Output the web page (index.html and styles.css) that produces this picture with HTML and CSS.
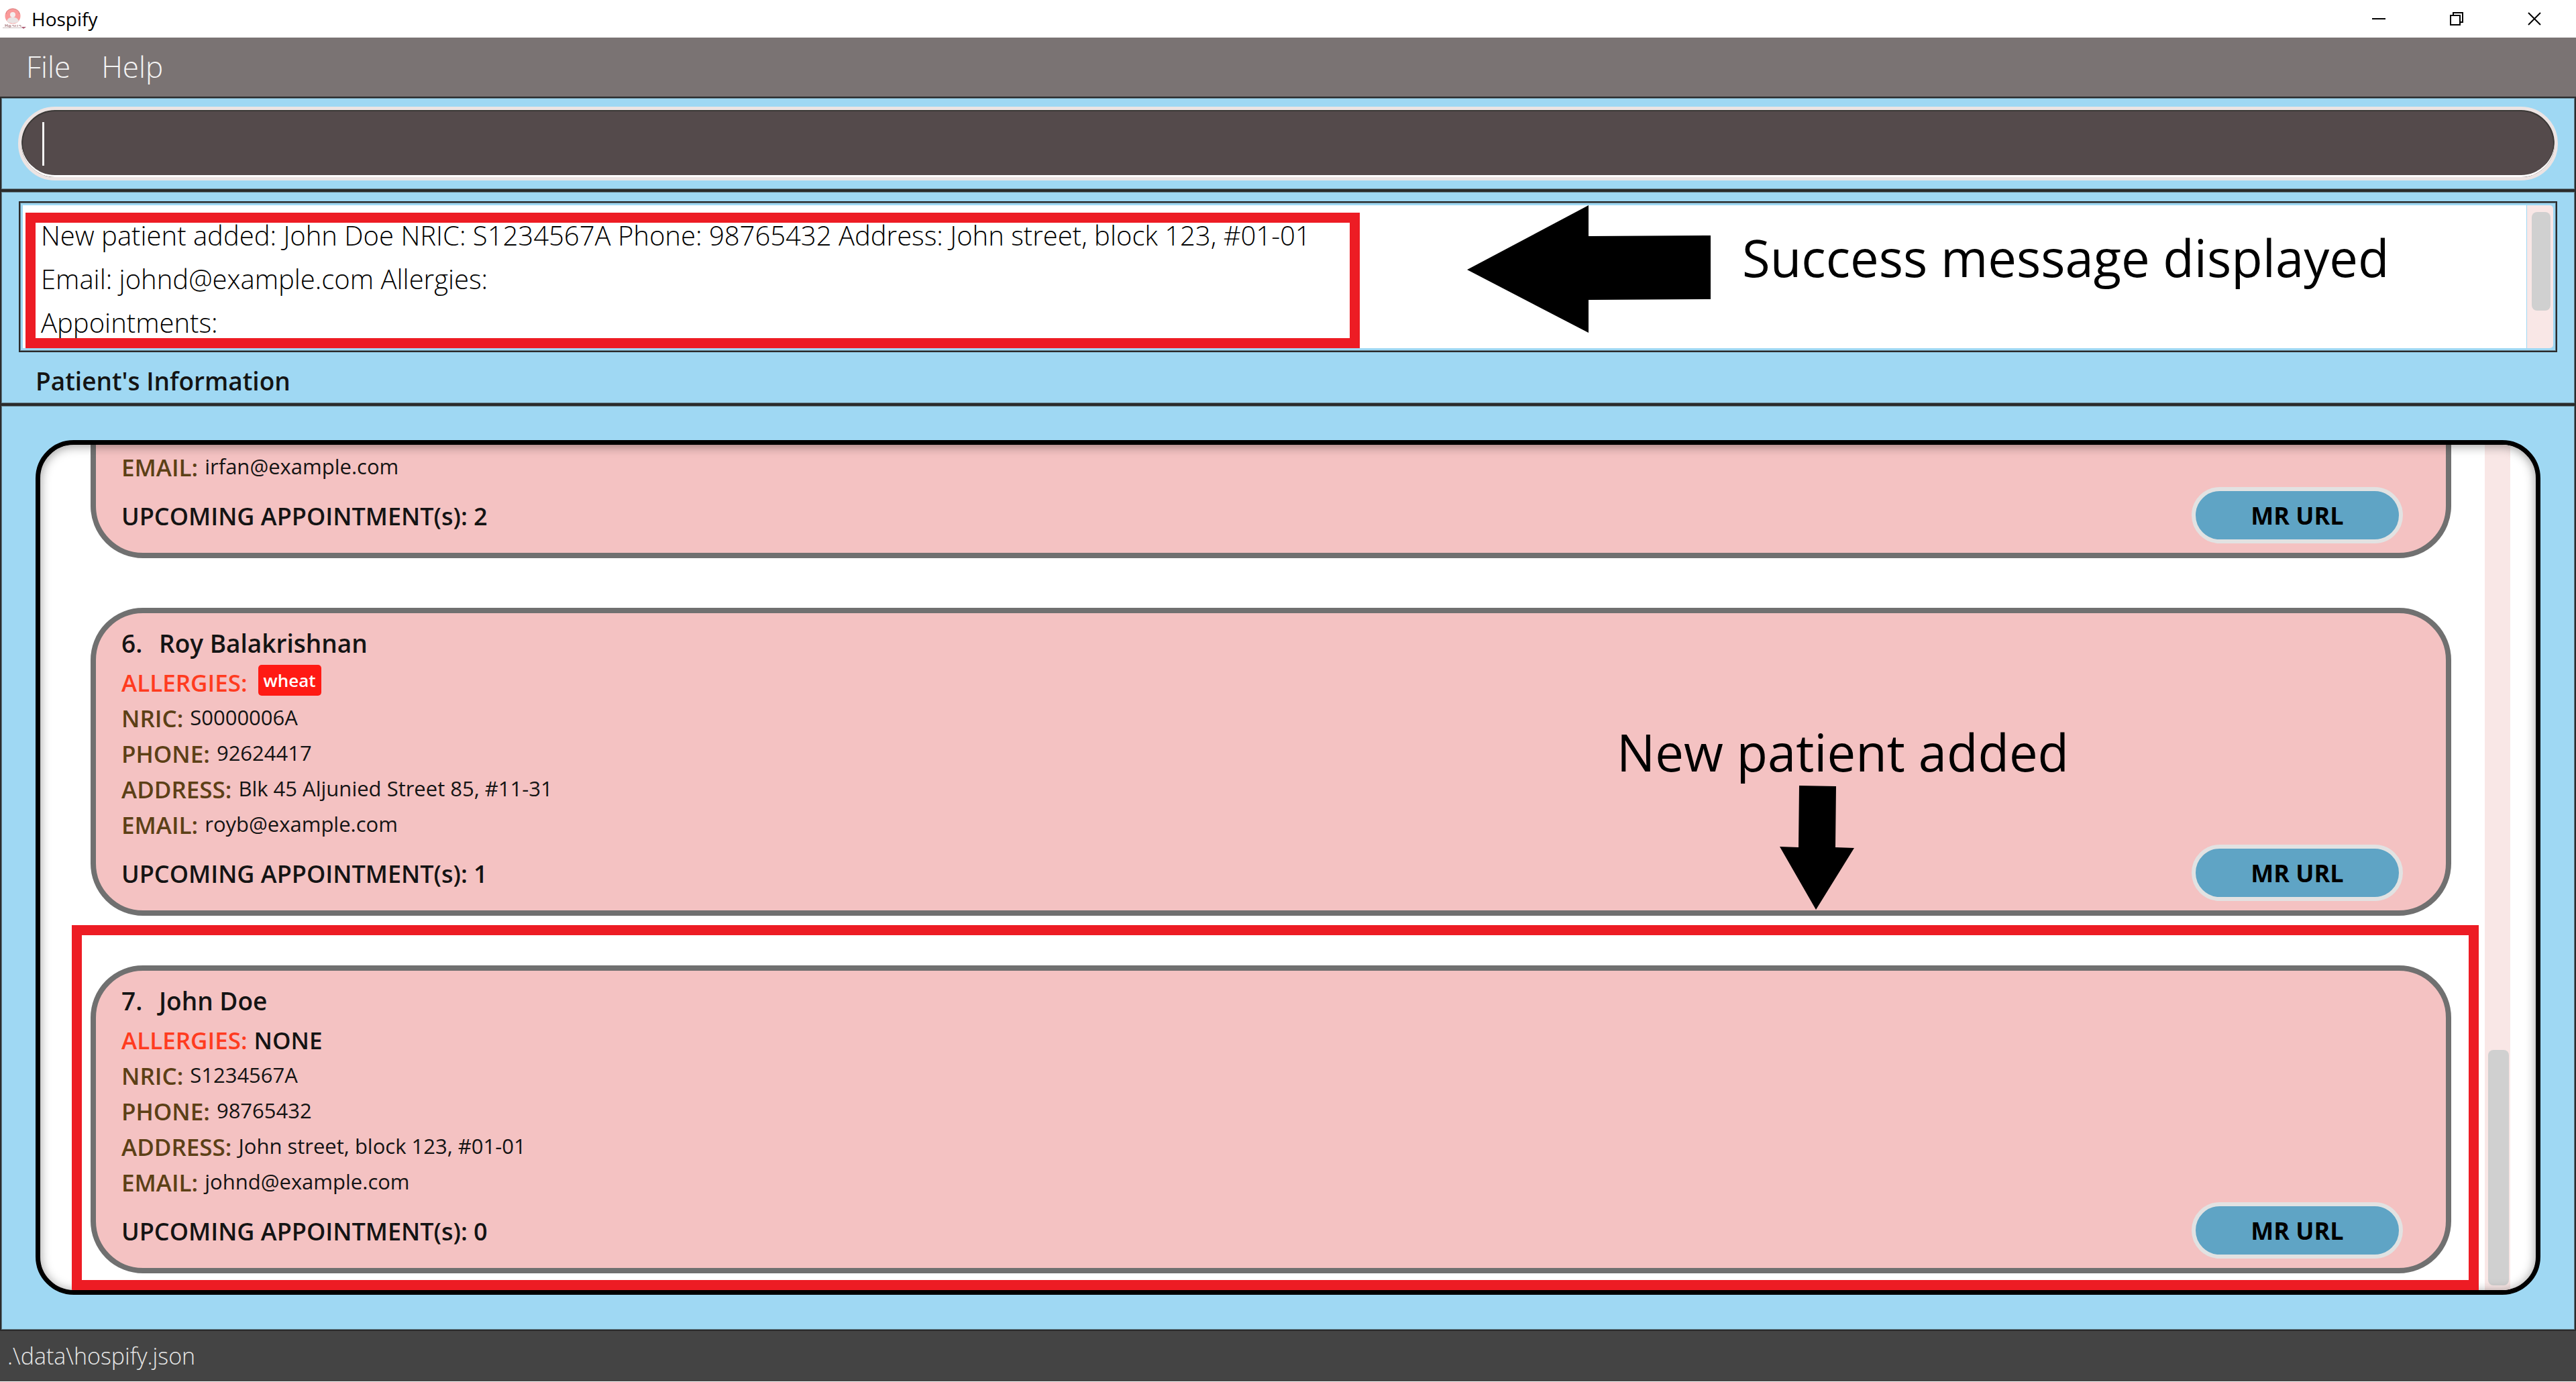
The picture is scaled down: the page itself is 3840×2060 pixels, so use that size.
FILE: index.html
```html
<!DOCTYPE html>
<html lang="en">
<head>
<meta charset="utf-8">
<title>Hospify</title>
<link rel="stylesheet" href="styles.css">
</head>
<body>
<header class="titlebar">
  <svg class="app-icon" viewBox="0 0 36 32" aria-hidden="true">
    <circle cx="15" cy="12" r="11.500" fill="#fa9a9a"/>
    <path d="M5 9a10 8 0 0 1 20 0" fill="none" stroke="#d98686" stroke-width="1"/>
    <circle cx="15" cy="10" r="4" fill="#f4eeee"/>
    <path d="M6 20q1-5 6-6h6q5 1 6 6q-9 6-18 0z" fill="#e9e4e4"/>
    <path d="M4 24v4M7 24v4M4 26h3M9 26h3v2H9zM14 26h3v2M19 25v3M22 25v3M24 26h3v2" fill="none" stroke="#a87c80" stroke-width="1"/>
    <path d="M0 29.500h30" stroke="#cbbcbc" stroke-width="1"/>
    <path d="M28 28h7l-4 3z" fill="#b0607a"/>
  </svg>
  <span class="app-name">Hospify</span>
  <div class="window-buttons">
    <button type="button" aria-label="Minimize"><svg viewBox="0 0 20 20"><path d="M0 10h20"/></svg></button>
    <button type="button" aria-label="Restore"><svg viewBox="0 0 20 20"><path d="M1 5h14v14H1zM5 5V1h14v14h-4"/></svg></button>
    <button type="button" aria-label="Close"><svg viewBox="0 0 20 20"><path d="M1 1l18 18M19 1L1 19"/></svg></button>
  </div>
</header>

<nav class="menubar">
  <button type="button">File</button>
  <button type="button">Help</button>
</nav>

<section class="pane command-pane">
  <div class="command-box">
    <span class="caret"></span>
    <input class="command-input" type="text" aria-label="Command">
  </div>
</section>

<section class="pane result-pane">
  <div class="result-box">
    <div class="result-text">
      <p>New patient added: John Doe NRIC: S1234567A Phone: 98765432 Address: John street, block 123, #01-01</p>
      <p>Email: johnd@example.com Allergies:</p>
      <p>Appointments:</p>
    </div>
    <div class="result-scroll"><div class="result-thumb"></div></div>
    <div class="mark mark-result"></div>
    <div class="note note-result">
      <svg class="arrow-left" viewBox="0 0 363 190" aria-hidden="true"><path d="M0 96L181 0V46L363 45V140L181 141V190Z"/></svg>
      <span>Success message displayed</span>
    </div>
  </div>
  <h1 class="section-title">Patient's Information</h1>
</section>

<main class="pane list-pane">
  <div class="list-frame">
    <div class="list-view">
      <article class="card">
        <div class="info">
          <div class="row"><span class="label">EMAIL:</span><span class="value">irfan@example.com</span></div>
          <p class="upcoming">UPCOMING APPOINTMENT(s): 2</p>
        </div>
        <button type="button" class="record">MR URL</button>
      </article>
      <article class="card">
        <div class="info">
          <h2 class="name"><span class="index">6.</span>Roy Balakrishnan</h2>
          <div class="row"><span class="label allergy">ALLERGIES:</span><span class="tag">wheat</span></div>
          <div class="row"><span class="label">NRIC:</span><span class="value">S0000006A</span></div>
          <div class="row"><span class="label">PHONE:</span><span class="value">92624417</span></div>
          <div class="row"><span class="label">ADDRESS:</span><span class="value">Blk 45 Aljunied Street 85, #11-31</span></div>
          <div class="row"><span class="label">EMAIL:</span><span class="value">royb@example.com</span></div>
          <p class="upcoming">UPCOMING APPOINTMENT(s): 1</p>
        </div>
        <button type="button" class="record">MR URL</button>
        <div class="note note-card">
          <span>New patient added</span>
          <svg class="arrow-down" viewBox="0 0 111 185" aria-hidden="true"><path d="M29 0L84 1L83 92L111 93L54 185L0 91L28 92Z"/></svg>
        </div>
      </article>
      <article class="card">
        <div class="info">
          <h2 class="name"><span class="index">7.</span>John Doe</h2>
          <div class="row"><span class="label allergy">ALLERGIES:</span><span class="none">NONE</span></div>
          <div class="row"><span class="label">NRIC:</span><span class="value">S1234567A</span></div>
          <div class="row"><span class="label">PHONE:</span><span class="value">98765432</span></div>
          <div class="row"><span class="label">ADDRESS:</span><span class="value">John street, block 123, #01-01</span></div>
          <div class="row"><span class="label">EMAIL:</span><span class="value">johnd@example.com</span></div>
          <p class="upcoming">UPCOMING APPOINTMENT(s): 0</p>
        </div>
        <button type="button" class="record">MR URL</button>
        <div class="mark mark-card"></div>
      </article>
    </div>
    <div class="list-scroll"><div class="list-thumb"></div></div>
  </div>
</main>

<footer class="statusbar">.\data\hospify.json</footer>
</body>
</html>
```
FILE: styles.css
```css
* { box-sizing: border-box; }

body {
  margin: 0;
  min-height: 100vh;
  height: 100vh;
  display: flex;
  flex-direction: column;
  overflow: hidden;
  background: #fff;
  color: #141414;
  font-family: "Open Sans", "Noto Sans", sans-serif;
}

button { font-family: inherit; margin: 0; padding: 0; border: 0; background: none; }
p, h1, h2 { margin: 0; }

/* window title bar */
.titlebar {
  flex: none;
  height: 56px;
  display: flex;
  align-items: center;
  padding: 0 4px;
}
.app-icon { width: 36px; height: 32px; }
.app-name { margin-left: 7px; font-size: 28px; color: #000; }
.window-buttons { margin-left: auto; display: flex; }
.window-buttons button {
  width: 116px;
  height: 54px;
  display: flex;
  align-items: center;
  justify-content: center;
}
.window-buttons svg { width: 20px; height: 20px; fill: none; stroke: #000; stroke-width: 2; }

/* menu */
.menubar {
  flex: none;
  height: 88px;
  display: flex;
  align-items: center;
  gap: 46px;
  padding: 0 39px 2px;
  background: #7a7373;
}
.menubar button { font-size: 44px; font-weight: 300; line-height: 60px; color: #f4f4f4; }

/* framed panes */
.pane {
  flex: none;
  border: 2px solid #2b2b2b;
  box-shadow: inset 0 0 0 1px #64808c;
  background: #9fd8f3;
}
.command-pane { padding: 13px 25px; }
.command-box {
  height: 110px;
  display: flex;
  align-items: center;
  padding: 0 31px;
  border: 5px solid #ece4e3;
  border-radius: 55px;
  background: #544a4b;
  box-shadow: inset 0 -3px 0 #fff, inset 0 0 0 2px #3a3836;
}
.caret { width: 3px; height: 65px; background: #f4f4f4; }
.command-input {
  flex: 1;
  min-width: 0;
  border: 0;
  outline: 0;
  background: none;
  color: #fff;
  font: 300 40px "Open Sans", sans-serif;
}

.result-pane { padding: 14px 26px 0; }
.result-box {
  position: relative;
  height: 225px;
  display: flex;
  border: 2px solid #2b2b2b;
  padding: 4px;
  box-shadow: inset 0 0 0 1px #64808c;
}
.result-text {
  flex: 1;
  padding: 12px 27px 0;
  background: #fff;
  color: #000;
  font-size: 40px;
  font-weight: 300;
  line-height: 65px;
}
.result-scroll {
  width: 40px;
  padding: 10px 4px 0 7px;
  background: #f9e7e6;
  border-left: 1px solid #9fd8f3;
  border-radius: 0 5px 5px 0;
}
.result-thumb { height: 147px; border-radius: 8px; background: #d0d0d0; }
.section-title {
  padding: 13px 25px 0;
  height: 76px;
  font-size: 37px;
  font-weight: 600;
  line-height: 60px;
}

/* annotations drawn over the window */
.mark { position: absolute; border: 15px solid #ed1c24; }
.mark-result { left: 8px; top: 15px; width: 1989px; height: 202px; }
.mark-card { left: -36px; top: -68px; right: -49px; bottom: -33px; }
.note { position: absolute; display: flex; color: #000; font-size: 76px; line-height: 100px; white-space: nowrap; }
.note-result { left: 2157px; top: 4px; gap: 47px; }
.note-result span { padding-top: 28px; }
.note-card { left: 2267px; top: 157px; flex-direction: column; }
.arrow-left { width: 363px; height: 190px; }
.arrow-down { width: 111px; height: 185px; margin-left: 243px; }

/* patient list */
.list-pane { flex: 1; min-height: 0; padding: 51px 51px 52px; }
.list-frame {
  position: relative;
  height: 100%;
  display: flex;
  overflow: hidden;
  border: 7px solid #000;
  border-radius: 57px;
  background: #fff;
}
.list-frame::after {
  content: "";
  position: absolute;
  inset: 0;
  border-radius: 50px;
  box-shadow: inset 0 2px 16px rgba(0, 0, 0, .4);
  pointer-events: none;
}
.list-view {
  flex: 1;
  min-width: 0;
  display: flex;
  flex-direction: column;
  justify-content: flex-end;
  gap: 74px;
  padding: 0 50px 25px 75px;
}
.list-scroll {
  flex: none;
  width: 38px;
  margin-right: 38px;
  padding: 0 2px 7px 5px;
  display: flex;
  flex-direction: column;
  justify-content: flex-end;
  background: #f9e7e6;
}
.list-thumb { height: 351px; border-radius: 8px; background: #d0d0d0; }

.card {
  position: relative;
  z-index: 1;
  flex: none;
  min-height: 459px;
  display: flex;
  justify-content: space-between;
  align-items: flex-end;
  padding: 18px 64px 14px 38px;
  border: 8px solid #707070;
  border-radius: 78px;
  background: #f4c2c2;
}
.card:first-child { z-index: 0; }
.info { padding-bottom: 14px; }
.name { display: flex; margin-bottom: 6px; font-size: 37px; font-weight: 600; line-height: 53px; }
.index { width: 56px; }
.row { display: flex; align-items: center; gap: 10px; height: 53px; line-height: 53px; }
.label { font-size: 35px; font-weight: 600; color: #5c4016; }
.allergy { color: #ff3b1f; }
.none { font-size: 35px; font-weight: 600; }
.value { padding-bottom: 2px; font-size: 31px; }
.tag {
  height: 46px;
  margin: 0 0 8px 6px;
  padding: 0 8px;
  border-radius: 5px;
  background: #ff1a14;
  color: #fff;
  font-size: 26px;
  font-weight: 600;
  line-height: 46px;
}
.upcoming { margin-top: 20px; font-size: 36px; font-weight: 600; line-height: 53px; }
.record {
  width: 315px;
  height: 84px;
  border: 6px solid #e2e2e2;
  border-radius: 42px;
  background: #5fa4c5;
  color: #000;
  font-size: 36px;
  font-weight: 700;
}

.statusbar {
  flex: none;
  height: 75px;
  margin-bottom: 1px;
  padding-left: 11px;
  background: #444;
  color: #e6e6e6;
  font-size: 34px;
  font-weight: 300;
  line-height: 75px;
}
```
